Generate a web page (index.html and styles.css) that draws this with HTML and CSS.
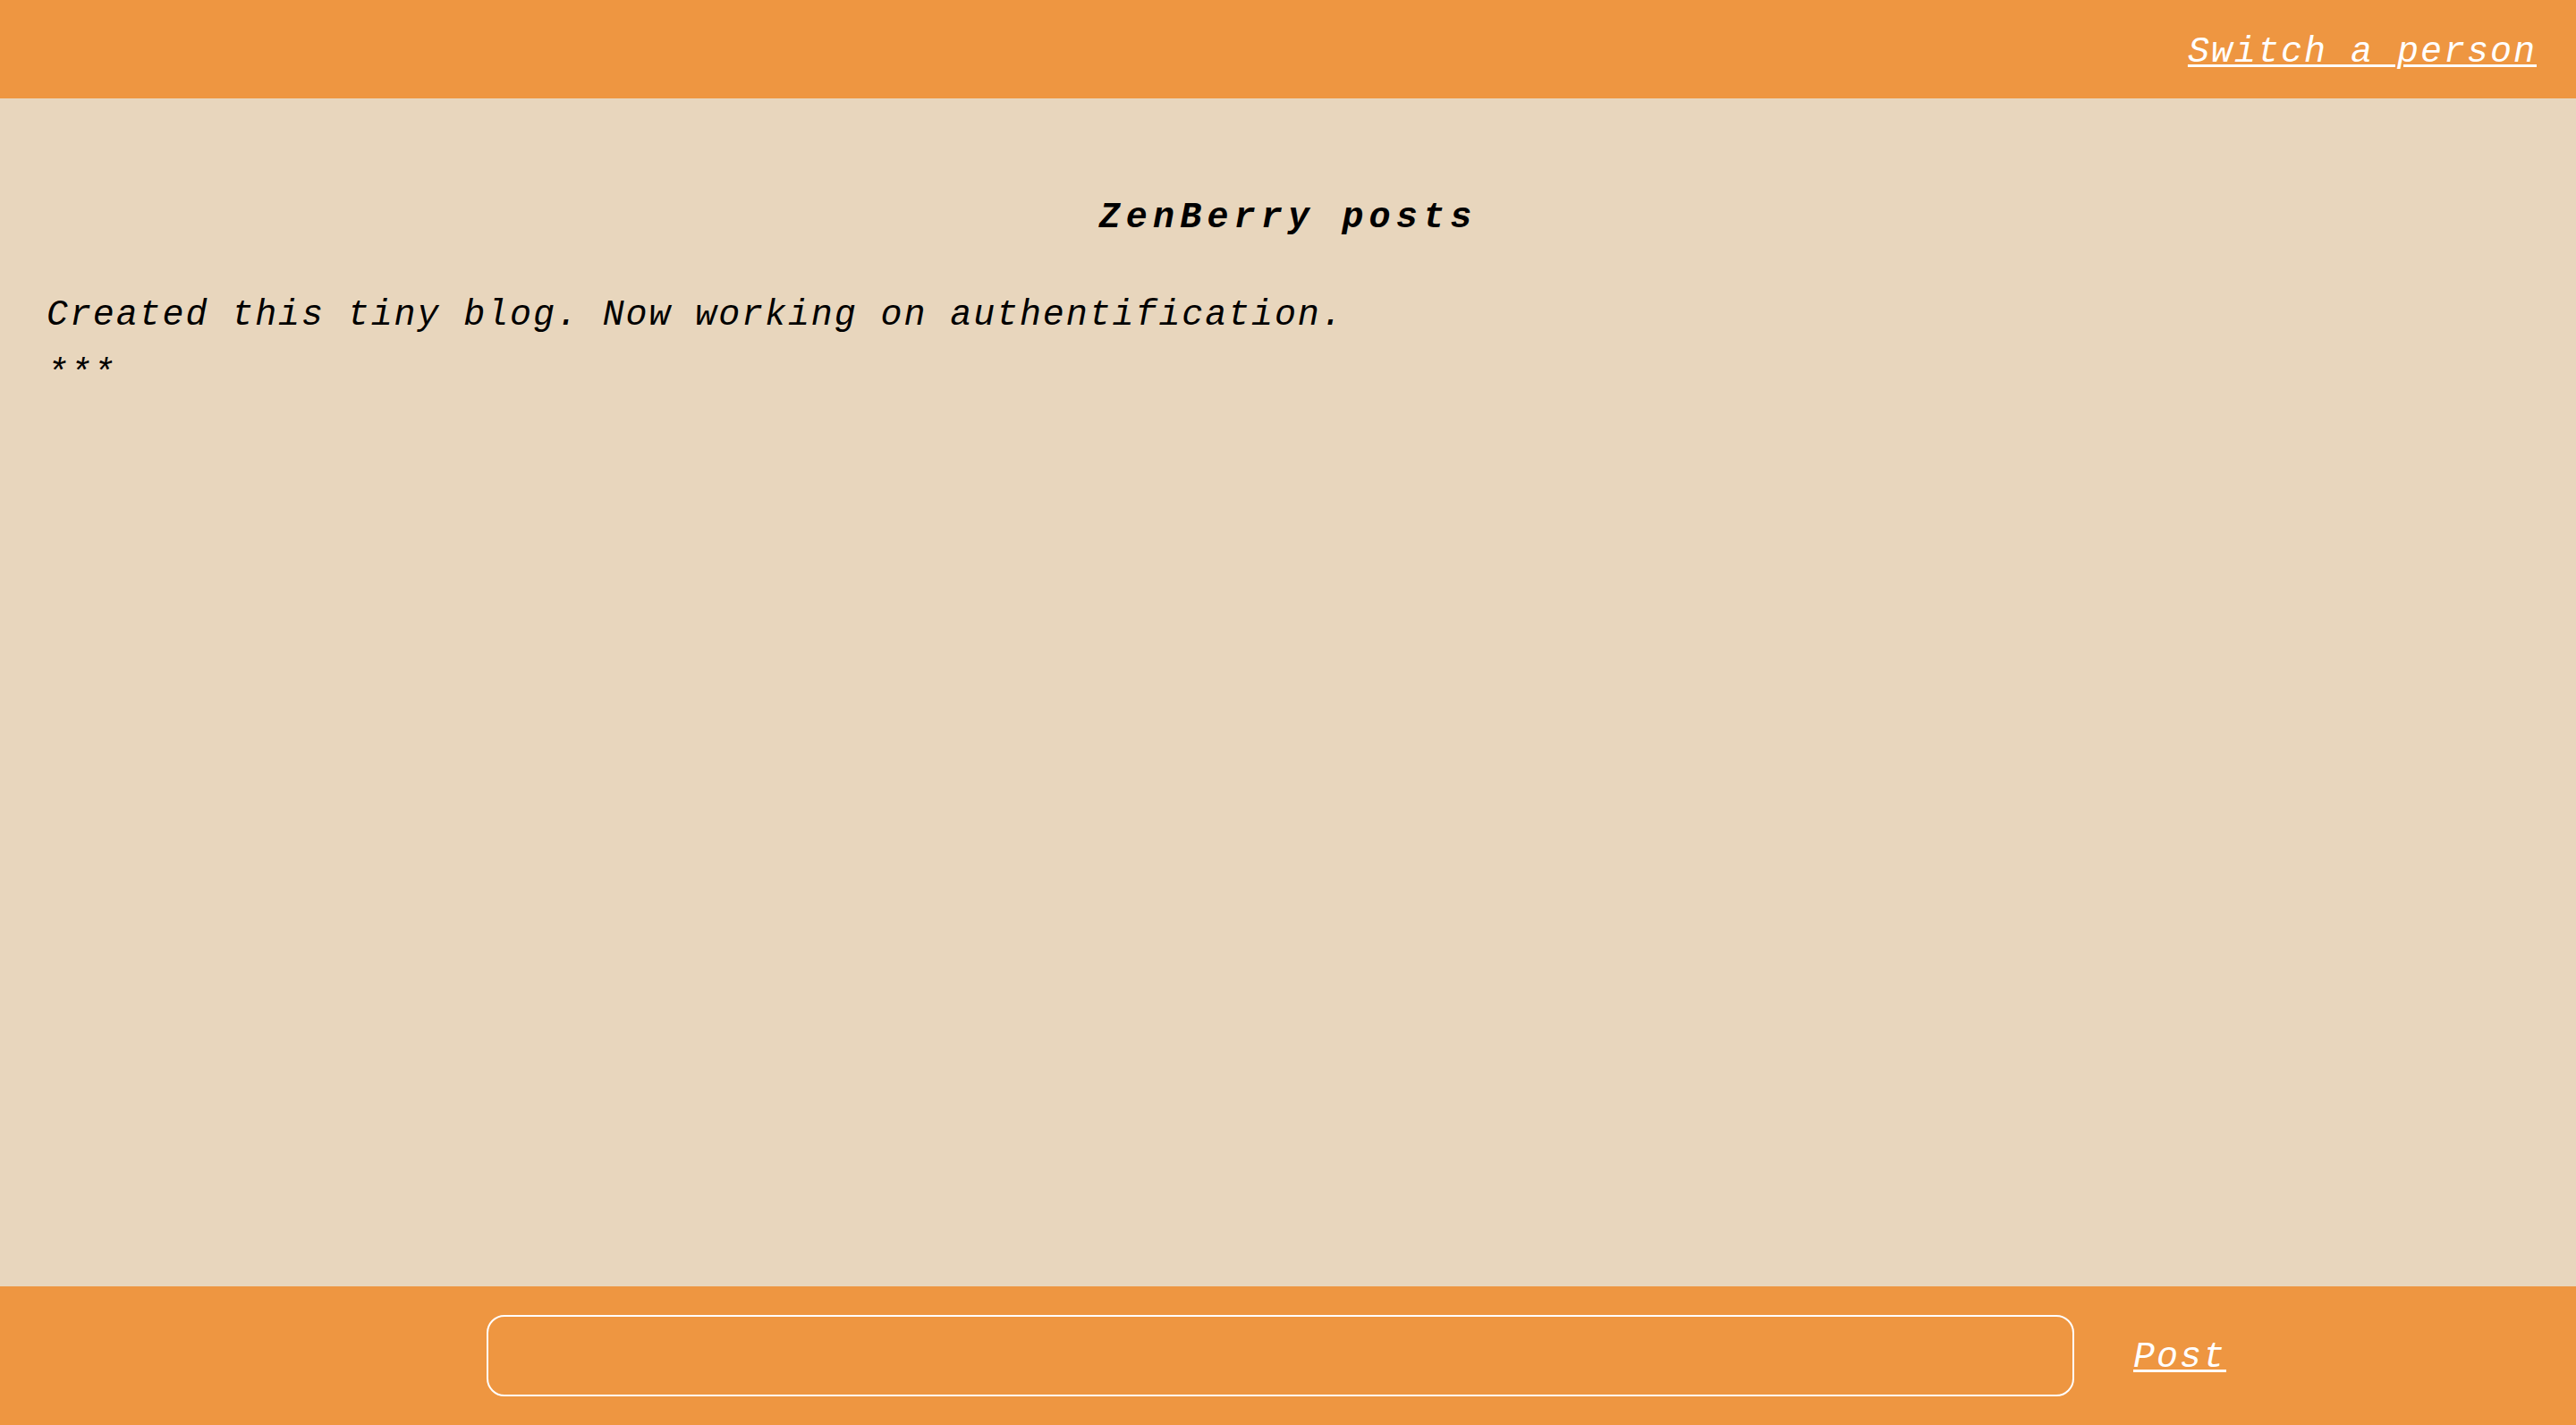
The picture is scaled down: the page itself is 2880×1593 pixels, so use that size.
FILE: index.html
```html
<!DOCTYPE html>
<html lang="en">
<head>
<meta charset="utf-8">
<title>ZenBerry posts</title>
<link rel="stylesheet" href="styles.css">
</head>
<body>
<div class="page">
  <header class="topbar">
    <a class="link" href="#">Switch a person</a>
  </header>
  <main class="content">
    <h1 class="title">ZenBerry posts</h1>
    <div class="posts">
      <p class="post">Created this tiny blog. Now working on authentification.</p>
      <p class="sep">***</p>
    </div>
  </main>
  <footer class="bottombar">
    <div class="composer">
      <div class="input"></div>
      <a class="link post-link" href="#">Post</a>
    </div>
  </footer>
</div>
</body>
</html>
```
FILE: styles.css
```css
html, body {
  margin: 0;
  padding: 0;
}
* {
  box-sizing: border-box;
}
body {
  background: #e8d6bd;
  font-family: "Liberation Mono", "Courier New", monospace;
  color: #000;
}
.page {
  min-height: 100vh;
  display: flex;
  flex-direction: column;
}
.topbar {
  height: 110px;
  background: #ee9641;
  display: flex;
  justify-content: flex-end;
  align-items: center;
  padding: 6px 44px 0 0;
}
.link {
  color: #fff;
  font-style: italic;
  font-size: 40px;
  letter-spacing: 2px;
  text-decoration: underline;
  text-decoration-thickness: 3px;
  text-underline-offset: 3px;
}
.post-link {
  padding-top: 4px;
}
.content {
  flex: 1;
  padding: 0 52px;
}
.title {
  margin: 104px 0 0;
  text-align: center;
  font-size: 40px;
  font-style: italic;
  font-weight: bold;
  letter-spacing: 6.2px;
  line-height: 60px;
}
.posts {
  margin-top: 48px;
}
.post, .sep {
  margin: 0;
  font-style: italic;
  font-size: 40px;
  letter-spacing: 1.9px;
  line-height: 62px;
}
.sep {
  margin-top: 4px;
}
.bottombar {
  height: 155px;
  background: #ee9641;
  display: flex;
  align-items: center;
}
.composer {
  display: flex;
  align-items: center;
  gap: 66px;
  padding-left: 544px;
}
.input {
  width: 1775px;
  height: 91px;
  border: 2px solid #fff;
  border-radius: 20px;
}
```
